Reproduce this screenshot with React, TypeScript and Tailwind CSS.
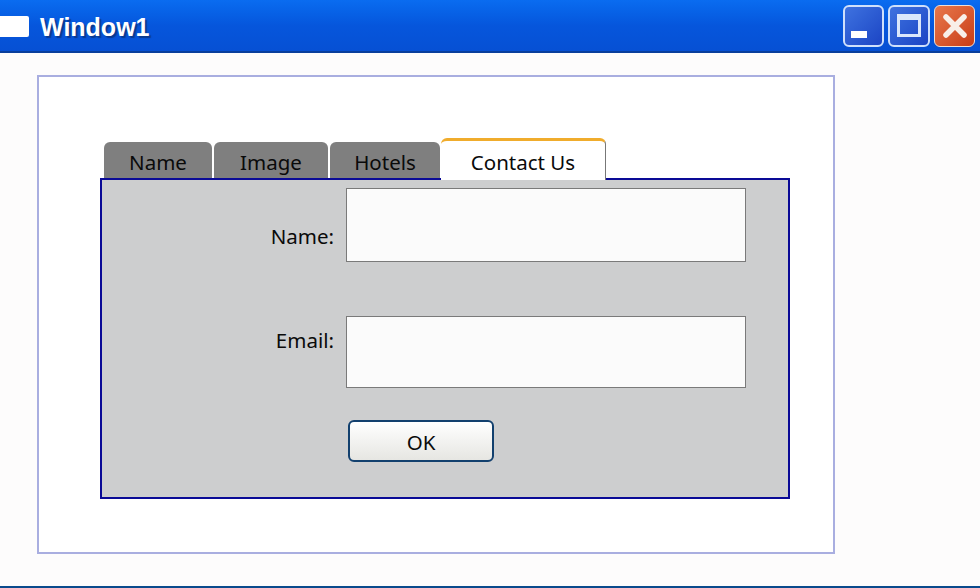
const fontClass = "font-['Noto_Sans','Liberation_Sans',sans-serif]";

function TitleBar() {
  return (
    <div className="flex h-[53px] items-center border-b-2 border-[#0a3f9c] bg-gradient-to-b from-[#0a6cf0] via-[#0656dc] to-[#0650d4] pr-[5px]">
      <div className="mt-[1px] h-[21px] w-[29px] rounded-r-[2px] bg-white" />
      <span className="mt-[3px] ml-[11px] font-['Liberation_Sans',sans-serif] text-[25px] leading-none font-bold text-white [text-shadow:2px_2px_1px_#0a3a90]">
        Window1
      </span>
      <div className="ml-auto flex gap-[4px]">
        <div className="flex h-[42px] w-[41px] items-end rounded-[6px] border-2 border-[#cfe0fb] bg-gradient-to-br from-[#3f72e0] to-[#1c44c4] pb-[7px] pl-[6px]">
          <div className="h-[7px] w-[16px] bg-white" />
        </div>
        <div className="flex h-[42px] w-[42px] items-center justify-center rounded-[6px] border-2 border-[#cfe0fb] bg-gradient-to-br from-[#3f72e0] to-[#1c44c4]">
          <div className="h-[23px] w-[24px] border-[3px] border-t-[6px] border-[#dbe7fb]" />
        </div>
        <div className="flex h-[42px] w-[41px] items-center justify-center rounded-[6px] border border-[#eedfd6] bg-gradient-to-br from-[#e8774a] to-[#c83c14]">
          <svg viewBox="0 0 24 24" className="h-[24px] w-[24px]">
            <path d="M3 3 L21 21 M21 3 L3 21" stroke="#f8efe8" strokeWidth="5.5" strokeLinecap="round" />
          </svg>
        </div>
      </div>
    </div>
  );
}

function Tab({ label, width }: { label: string; width: string }) {
  return (
    <div
      className={`flex h-[36px] items-center justify-center rounded-t-[6px] bg-[#7f7f7f] pt-[4px] text-[20.5px] text-[#0a0a0a] ${width}`}
    >
      {label}
    </div>
  );
}

function Field({ label, height, labelClass }: { label: string; height: string; labelClass: string }) {
  return (
    <div className="flex">
      <div className={`w-[232px] text-right text-[20.5px] leading-none text-[#0a0a0a] ${labelClass}`}>{label}</div>
      <div className={`ml-[12px] w-[400px] border border-[#7a7a7a] bg-[#fbfbfb] ${height}`} />
    </div>
  );
}

export default function App() {
  return (
    <div className={`flex h-[588px] w-[980px] flex-col overflow-hidden border-b-2 border-[#0a4a8c] bg-[#fdfcfc] ${fontClass}`}>
      <TitleBar />
      <div className="pt-[22px] pl-[37px]">
        <div className="h-[479px] w-[798px] border-2 border-[#a9aee0] bg-white pt-[61px] pl-[61px]">
          <div className="relative z-10 flex items-end gap-[2px] pl-[4px]">
            <Tab label="Name" width="w-[108px]" />
            <Tab label="Image" width="w-[114px]" />
            <Tab label="Hotels" width="w-[110px]" />
            <div className="-mb-[2px] -ml-[1px] flex h-[42px] w-[165px] items-center justify-center rounded-t-[6px] border-t-[3px] border-r border-[#f0ac2c] border-r-[#777] bg-white pt-[4px] text-[20.5px] text-[#0a0a0a]">
              Contact Us
            </div>
          </div>
          <div className="h-[321px] w-[690px] border-2 border-[#0a0a96] bg-[#cdcecf] pt-[8px]">
            <Field label="Name:" height="h-[74px]" labelClass="pt-[38px]" />
            <div className="h-[54px]" />
            <Field label="Email:" height="h-[72px]" labelClass="pt-[14px]" />
            <button
              type="button"
              className="mt-[32px] ml-[246px] flex h-[42px] w-[146px] items-center justify-center rounded-[6px] border-2 border-[#12406e] bg-gradient-to-b from-white to-[#e6e6e2] pt-[2px] text-[20.5px] text-[#0a0a0a]"
            >
              OK
            </button>
          </div>
        </div>
      </div>
    </div>
  );
}
